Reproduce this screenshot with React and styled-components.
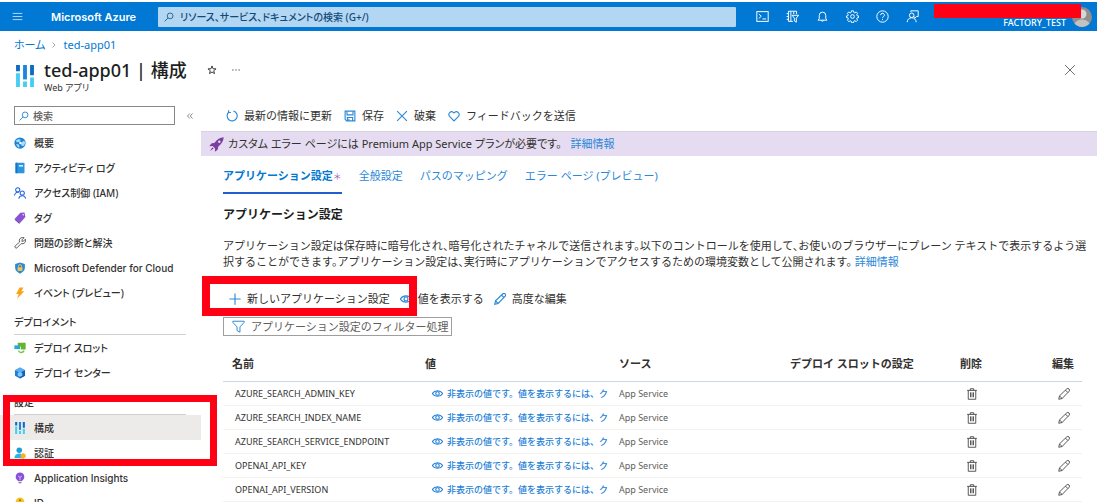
import styled, { createGlobalStyle, css } from 'styled-components';

const GlobalStyle = createGlobalStyle`
  * {
    box-sizing: border-box;
  }
  body {
    margin: 0;
    background: #fff;
    color: #323130;
    font-family: "Noto Sans", "Noto Sans CJK JP", sans-serif;
    font-size: 11px;
    line-height: 16px;
  }
  button, input {
    font: inherit;
    color: inherit;
  }
  button {
    padding: 0;
    border: 0;
    background: none;
    white-space: nowrap;
  }
  a {
    color: #2b88d8;
    text-decoration: none;
  }
`;

const Page = styled.div`
  position: relative;
  display: flex;
  flex-direction: column;
  height: 100vh;
  padding: 2px 2px 0 0;
  overflow: hidden;
`;

const Highlight = styled.div`
  position: absolute;
  left: ${props => props.$left}px;
  top: ${props => props.$top}px;
  width: ${props => props.$width}px;
  height: ${props => props.$height}px;
  border: ${props => props.$line}px solid #ff0015;
  pointer-events: none;
`;

const Icon = styled.svg`
  display: block;
  flex: none;
  width: ${props => props.$size || 12}px;
  height: ${props => props.$size || 12}px;
  fill: none;
  stroke: ${props => props.$color || 'currentColor'};
  stroke-width: ${props => props.$weight || 1};
`;

/* top bar */

const TopBar = styled.header`
  position: relative;
  display: flex;
  flex: none;
  align-items: center;
  height: 29px;
  padding-left: 12px;
  background: #0078d4;
  color: #fff;
`;

const Brand = styled.a`
  width: 107px;
  margin-left: 28px;
  color: #fff;
  font-family: Inter, sans-serif;
  font-weight: 600;
  white-space: nowrap;
`;

const GlobalSearch = styled.label`
  display: flex;
  flex: 1;
  align-items: center;
  gap: 6px;
  height: 20px;
  padding-left: 6px;
  background: #b3d6f2;
  color: #0f5288;
  border-radius: 1px;
`;

const SearchInput = styled.input`
  flex: 1;
  min-width: 0;
  height: 16px;
  padding: 0;
  border: 0;
  outline: 0;
  background: none;

  &::placeholder {
    color: ${props => props.$hint};
    opacity: 1;
  }
  ${props => props.$compact && css`
    font-size: 10px;
    font-weight: 500;
    font-feature-settings: "palt";
  `}
`;

const TopActions = styled.div`
  display: flex;
  gap: 17px;
  margin-left: 20px;
`;

const Account = styled.div`
  display: flex;
  align-items: center;
  justify-content: flex-end;
  gap: 6px;
  width: 178px;
  padding-right: 5px;
`;

const Directory = styled.span`
  align-self: flex-end;
  margin-top: 13px;
  font-size: 9px;
  font-weight: 500;
  line-height: 12px;
`;

const Redaction = styled.div`
  position: absolute;
  top: 2px;
  right: 16px;
  width: 147px;
  height: 14px;
  background: #ff0015;
`;

/* title area */

const Breadcrumb = styled.nav`
  display: flex;
  align-items: center;
  gap: 5px;
  height: 28px;
  padding-left: 14px;
  font-feature-settings: "palt";

  a {
    color: #0078d4;
  }
`;

const TitleBar = styled.div`
  display: flex;
  flex: none;
  height: 40px;
  padding: 0 21px 0 14px;
`;

const TitleIcon = styled.div`
  padding-top: 6px;
`;

const TitleText = styled.div`
  margin-left: 8px;
`;

const Title = styled.h1`
  margin: 0;
  font-size: 18px;
  font-weight: 500;
  line-height: 22px;
  color: #201f1e;
`;

const Subtitle = styled.div`
  font-size: 9px;
  line-height: 14px;
  font-feature-settings: "palt";
`;

const TitleActions = styled.div`
  display: flex;
  flex: 1;
  align-items: center;
  gap: 14px;
  height: 22px;
  margin-left: 20px;

  button:last-child {
    margin-left: auto;
  }
`;

const Body = styled.div`
  display: flex;
  flex: 1;
  min-height: 0;
`;

/* side menu */

const Sidebar = styled.aside`
  flex: none;
  width: 201px;
  padding-top: 7px;
`;

const MenuTop = styled.div`
  display: flex;
  align-items: center;
  gap: 11px;
  height: 19px;
  margin: 0 0 5px 14px;
`;

const MenuSearch = styled.label`
  display: flex;
  align-items: center;
  gap: 4px;
  width: 161px;
  height: 19px;
  padding-left: 4px;
  border: 1px solid #8a8886;
`;

const MenuItem = styled.a`
  display: flex;
  align-items: center;
  gap: 8px;
  height: 25px;
  padding-left: 14px;
  color: #323130;
  font-family: ${props => props.$latin ? 'Inter, ' : ''}"Noto Sans", "Noto Sans CJK JP", sans-serif;
  font-size: 10px;
  font-weight: 500;
  font-feature-settings: "palt";
  white-space: nowrap;
  ${props => props.$active && css`
    background: #edebe9;
  `}
`;

const MenuSection = styled.h2`
  height: 30px;
  margin: 0 15px 0 14px;
  padding-top: 9px;
  border-bottom: 1px solid #d2d0ce;
  font-size: 10px;
  font-weight: 500;
  font-feature-settings: "palt";
`;

/* content */

const Main = styled.main`
  flex: 1;
  min-width: 0;
  padding-top: 2px;
`;

const CommandBar = styled.div`
  display: flex;
  align-items: center;
  gap: ${props => props.$gap}px;
  height: ${props => props.$height}px;
  padding-left: ${props => props.$indent}px;
`;

const Command = styled.button`
  display: flex;
  align-items: center;
  gap: 6px;
`;

const Banner = styled.div`
  display: flex;
  align-items: center;
  height: 25px;
  padding-left: 8px;
  border-top: 1px solid #d8d2de;
  background: #e6dcf1;
  white-space: nowrap;

  span {
    margin: 0 9px 0 4px;
    font-feature-settings: "palt";
  }
`;

const Content = styled.div`
  padding: 8px 15px 0 22px;
`;

const Tabs = styled.nav`
  display: flex;
  gap: 17px;
  height: 30px;
`;

const Tab = styled.a`
  height: 30px;
  padding-top: 4px;
  white-space: nowrap;
  ${props => props.$active && css`
    border-bottom: 2px solid #1f5fd0;
    color: #0078d4;
    font-weight: 700;
  `}
`;

const Dirty = styled.span`
  color: #a05cb8;
  font-size: 9px;
  font-weight: 400;
`;

const Heading = styled.h2`
  margin: 12px 0 14px;
  font-size: 12px;
  font-weight: 600;
  line-height: 18px;
  color: #201f1e;
`;

const Description = styled.p`
  margin: 0 -12px 11px 0;
  font-feature-settings: "halt";
`;

const Filter = styled.label`
  display: flex;
  align-items: center;
  gap: 6px;
  width: 229px;
  height: 19px;
  padding-left: 8px;
  border: 1px solid #a19f9d;
`;

const Settings = styled.table`
  width: 100%;
  margin-top: 11px;
  border-collapse: separate;
  border-spacing: 0;
  table-layout: fixed;

  th {
    height: 35px;
    padding: 0 0 0 9px;
    border-bottom: 1px solid #c8d8e4;
    font-weight: 600;
    text-align: left;
    white-space: nowrap;
  }
  td {
    height: 24px;
    padding: 0 0 0 9px;
    border-bottom: 1px solid #f3f2f1;
    font-size: 9px;
    line-height: 16px;
    color: #605e5c;
  }
`;

const Col = styled.col`
  width: ${props => props.$width ? `${props.$width}px` : 'auto'};
`;

const NameCell = styled.td`
  && {
    padding-left: 12px;
    color: #323130;
  }
`;

const HiddenValue = styled.button`
  display: flex;
  align-items: center;
  gap: 4px;
  width: 100%;
  padding-left: 7px;
  overflow: hidden;
  color: #1f7fd6;
  font-weight: 500;
`;

const RowAction = styled.button`
  display: block;
  margin-left: 6px;
`;

const glyphs = {
  menu: <path d="M1 3.5h14M1 8h14M1 12.5h14" />,
  search: <><circle cx="9.8" cy="6.2" r="4.6" /><path d="M6.4 9.6 1 15" /></>,
  shell: <><rect x="1" y="2" width="14" height="12" /><path d="m3.5 5 3 2.700-3 2.700M8 11h4.500" /></>,
  filterDir: <><path d="M8.500 14H3V1.500h6.500V5M3 4.500H.800M3 8H.800M3 11.500H.800M6 1.500V14M9.500 1.500H13V5" /><path d="M7.500 6.500h8l-2.800 3.500v5l-2.400-1.500V10z" /></>,
  bell: <><path d="M2.500 12.500h11L12 10.4V6.6a4 4 0 0 0-8 0v3.800z" /><path d="M6.500 12.800a1.600 1.600 0 0 0 3 0" /></>,
  gear: <><circle cx="8" cy="8" r="2.3" /><path d="m6.8 1-.5 2-1.1.5-1.8-1.1-1.7 1.7 1.1 1.8L2.3 7l-1.8.4v1.8l1.9.5.5 1.1-1.1 1.8 1.7 1.7 1.8-1.1 1.1.5.4 2h2.4l.5-2 1.1-.5 1.8 1.1 1.7-1.7-1.1-1.8.5-1.1 1.9-.5V7.4L13.7 7l-.5-1.1 1.1-1.8-1.7-1.7-1.8 1.1L9.7 3l-.5-2z" /></>,
  help: <><circle cx="8" cy="8" r="7" /><path d="M5.7 6.3a2.300 2.300 0 1 1 3.400 2C8.300 8.800 8 9.100 8 10M8 11.200v1.300" /></>,
  support: <><path d="M6 2.500V1h9v7h-2l-2.200 2.200V8" /><circle cx="7" cy="6.500" r="2.800" /><path d="M1.500 15a5.500 5.500 0 0 1 11 0" /></>,
  star: <path d="m8 1.500 1.700 4.500 4.800.200-3.800 3 1.300 4.600L8 11.200l-4 2.600 1.300-4.600-3.800-3 4.800-.200z" />,
  more: <path d="M2 8h2M7 8h2M12 8h2" />,
  close: <path d="m1.500 1.500 13 13M14.500 1.500l-13 13" />,
  collapse: <path d="M7.500 3 3 8l4.500 5M13 3 8.500 8l4.500 5" />,
  crumb: <path d="m5 3 5 5-5 5" />,
  refresh: <><path d="M10 1.300A6.700 6.700 0 1 1 3.500 3" /><path d="M3.500.300V3.300H6.500" /></>,
  save: <><path d="M1.500 1.500h13v13H3.500l-2-2z" /><path d="M4 1.500v5h8v-5M4.500 14.500v-4.500h7v4.500M6.500 11.500v3" /></>,
  heart: <path d="M8 14.500 2 8.400a3.700 3.700 0 0 1 5.200-5.200l.800.800.800-.800A3.700 3.700 0 0 1 14 8.400z" />,
  plus: <path d="M8 .500v15M.500 8h15" />,
  eye: <><path d="M.500 8C4 2.500 12 2.500 15.500 8 12 13.500 4 13.500.500 8z" /><circle cx="8" cy="8" r="2.600" /></>,
  pencil: <><path d="m1 15 1-4.500L11.500 1.300a1.900 1.900 0 0 1 3.200 3.200L5.500 14z" /><path d="m10 2.800 3.200 3.200M2 10.500 5.500 14" /></>,
  funnel: <path d="M1 1.500h14v1.300L9.800 8.500V15l-3.600-2V8.500L1 2.800z" />,
  trash: <><path d="M1.500 3.200h13M5.700 3V1h4.600v2M3 3.200v11.800h10V3.200" /><path d="M6 5.800v6.500M8 5.800v6.500M10 5.800v6.500" /></>,
  rocket: <g fill="#7b3f9e" stroke="none"><path d="M15.700.300C11.800.600 8.500 2.500 6 6L2.500 6.800.300 9.800l3.500-.300L6.500 12.200l-.300 3.500 3-2.200.800-3.500c3.500-2.500 5.400-5.800 5.700-9.700z" /><path d="M3.700 11 1 15l4-2.700z" /><circle cx="11" cy="5" r="1.300" fill="#e6dcf1" /></g>,
};

const menuIcons = {
  overview: <g stroke="none"><circle cx="8" cy="8" r="7.500" fill="#1b84d8" /><path d="M2.500 4.500 6 2.500l3 1-1.500 3-4 .500zM9 8l4.500-3.500L15 8l-2 4-3-.500zM2.500 9.500l3.500 0 1.500 3-1.500 1.700z" fill="#a8dcf8" /><circle cx="8.500" cy="8" r="1.600" fill="#fff" /></g>,
  log: <g stroke="none"><rect x="2" y="1" width="12" height="14" rx="1" fill="#2b95e2" /><rect x="2" y="1" width="2.500" height="14" fill="#0f78c4" /><path d="M6.500 4h5.500v2.200H6.500z" fill="#d4effc" /></g>,
  iam: <g stroke="#2868e0" strokeWidth="1.400"><circle cx="5" cy="3.800" r="2.800" /><path d="M.700 11.500a4.600 4.600 0 0 1 6-4.400" /><circle cx="11" cy="8" r="2.800" /><path d="M6.400 15.500a4.700 4.700 0 0 1 9.200 0" /></g>,
  tag: <g stroke="none"><path d="M8.500 1 14 .800l1.200 6L8 14.800 1 9z" fill="#8a53d2" /><path d="m1 9 7 5.800-1 .700-5.800-4.900z" fill="#5f2da8" /><circle cx="12.300" cy="3.500" r="1" fill="#fff" /></g>,
  wrench: <path stroke="#55534f" strokeWidth="1.200" d="M10.500 6 11 3l2.600-2A4.500 4.500 0 0 0 7.400 6.800L1.500 12a1.800 1.800 0 0 0 2.500 2.500L9.500 8.800A4.500 4.500 0 0 0 15.200 2.800L13 5.300z" />,
  defender: <g stroke="none"><path d="M8 .500 14.500 2.500v5.200c0 3.800-3 6.300-6.500 7.800-3.500-1.500-6.500-4-6.500-7.800V2.500z" fill="#2a8ade" /><path d="M4.800 7h6.400v4.800H4.800z" fill="#f9c646" /><path d="M6 7V5.500a2 2 0 0 1 4 0V7" fill="none" stroke="#f9c646" strokeWidth="1.200" /></g>,
  event: <path stroke="none" fill="#fba21b" d="M7.500.500h5L9.800 5.800h4L4 15.500l2.300-6.200H2.800z" />,
  slot: <g stroke="none"><path d="M5 1h10.500v9H9V6H5z" fill="#63b52e" /><path d="M.500 4.500H8v5H.500z" fill="#28a8d8" /><path d="M6 11.500c1 3 5.500 3.500 7.500 0" fill="none" stroke="#79c843" strokeWidth="2" /></g>,
  center: <g stroke="none"><path d="m8 .700 6.700 3.600v7.400L8 15.300l-6.700-3.600V4.300z" fill="#1f7ad8" /><path d="m8 .700 6.700 3.600L8 8 1.300 4.300z" fill="#5aaef2" /><path d="M8 8v7.300l6.700-3.600V4.300z" fill="#1260b8" /><path d="m5 8 3-1.500L11 8v3.500L8 13l-3-1.500z" fill="#86c8fa" /></g>,
  config: <g stroke="none"><path d="M1.500 0h2.800v4.500H1.500zM11.700 0h2.800v7.500h-2.800z" fill="#0f6ac4" /><path d="M6.600 0h2.800v10.500H6.600z" fill="#1b86de" /><path d="M1.500 6h2.800v10H1.500zM6.600 12h2.800v4H6.600zM11.700 9h2.800v7h-2.800z" fill="#45cdf4" /></g>,
  auth: <g stroke="none"><circle cx="7" cy="4.300" r="3.700" fill="#1c9ed8" /><path d="M.500 15a6.500 6.500 0 0 1 13 0z" fill="#28b4ea" /><path d="m12 8 3.500 2v3.500L12 15.500l-3-2V10z" fill="#f5b321" /></g>,
  insights: <g stroke="none"><path d="M8 .500a5.800 5.800 0 0 0-3 10.700V12h6v-.800A5.800 5.800 0 0 0 8 .500z" fill="#8a50dc" /><path d="M5.700 13h4.600v1L8 15.700 5.700 14z" fill="#8c8a94" /><path d="M5.500 5.500 8 7l2.500-1.500M8 7v4" fill="none" stroke="#e8d8fc" /></g>,
  identity: <g stroke="none"><path d="M8 .500a6 6 0 0 0-3 11V14l3 2 3-2v-2.500a6 6 0 0 0-3-11z" fill="#f8c220" /><circle cx="8" cy="4.300" r="1.300" fill="#9a6a10" /></g>,
};

const Glyph = ({ name, size, color, weight }) => (
  <Icon viewBox="0 0 16 16" $size={size} $color={color} $weight={weight} aria-hidden="true">
    {glyphs[name] || menuIcons[name]}
  </Icon>
);

const menu = [
  { icon: 'overview', label: '概要' },
  { icon: 'log', label: 'アクティビティ ログ' },
  { icon: 'iam', label: 'アクセス制御 (IAM)' },
  { icon: 'tag', label: 'タグ' },
  { icon: 'wrench', label: '問題の診断と解決' },
  { icon: 'defender', label: 'Microsoft Defender for Cloud', latin: true },
  { icon: 'event', label: 'イベント (プレビュー)' },
  { section: 'デプロイメント' },
  { icon: 'slot', label: 'デプロイ スロット' },
  { icon: 'center', label: 'デプロイ センター' },
  { section: '設定' },
  { icon: 'config', label: '構成', active: true },
  { icon: 'auth', label: '認証' },
  { icon: 'insights', label: 'Application Insights', latin: true },
  { icon: 'identity', label: 'ID', latin: true },
];

const topActions = [
  ['shell', 'Cloud Shell'],
  ['filterDir', 'ディレクトリ'],
  ['bell', '通知'],
  ['gear', '設定'],
  ['help', 'ヘルプ'],
  ['support', 'フィードバック'],
];

const commands = [
  ['refresh', '最新の情報に更新'],
  ['save', '保存'],
  ['close', '破棄'],
  ['heart', 'フィードバックを送信'],
];

const settingCommands = [
  ['plus', '新しいアプリケーション設定'],
  ['eye', '値を表示する'],
  ['pencil', '高度な編集'],
];

const settings = [
  'AZURE_SEARCH_ADMIN_KEY',
  'AZURE_SEARCH_INDEX_NAME',
  'AZURE_SEARCH_SERVICE_ENDPOINT',
  'OPENAI_API_KEY',
  'OPENAI_API_VERSION',
];

const Header = () => (
  <TopBar>
    <button aria-label="メニュー"><Glyph name="menu" size={11} /></button>
    <Brand href="#">Microsoft Azure</Brand>
    <GlobalSearch>
      <Glyph name="search" size={10} weight={1.3} />
      <SearchInput $compact $hint="#0f4a7a" aria-label="検索" placeholder="リソース、サービス、ドキュメントの検索 (G+/)" />
    </GlobalSearch>
    <TopActions>
      {topActions.map(([icon, label]) => (
        <button key={icon} aria-label={label}><Glyph name={icon} size={13} weight={1.2} /></button>
      ))}
    </TopActions>
    <Account>
      <Directory>FACTORY_TEST</Directory>
      <Icon viewBox="0 0 20 20" $size={20} aria-hidden="true">
        <g stroke="none">
          <circle cx="10" cy="10" r="10" fill="#8f8f8f" />
          <circle cx="10" cy="7" r="4.500" fill="#d6d6d6" />
          <path d="M2.500 16.500a9 9 0 0 1 15 0 10 10 0 0 1-15 0z" fill="#c2c2c2" />
        </g>
      </Icon>
    </Account>
    <Redaction />
  </TopBar>
);

const Menu = () => (
  <Sidebar>
    <MenuTop>
      <MenuSearch>
        <Glyph name="search" size={10} color="#2b88d8" weight={1.5} />
        <SearchInput $compact $hint="#605e5c" aria-label="メニューの検索" placeholder="検索" />
      </MenuSearch>
      <button aria-label="折りたたむ"><Glyph name="collapse" size={8} color="#605e5c" weight={1.5} /></button>
    </MenuTop>
    {menu.map(item => item.section ? (
      <MenuSection key={item.section}>{item.section}</MenuSection>
    ) : (
      <MenuItem key={item.label} href="#" $active={item.active} $latin={item.latin}>
        <Glyph name={item.icon} />
        {item.label}
      </MenuItem>
    ))}
  </Sidebar>
);

const SettingsTable = () => (
  <Settings>
    <colgroup>
      <Col $width={193} />
      <Col $width={194} />
      <Col $width={171} />
      <Col />
      <Col $width={92} />
      <Col $width={39} />
    </colgroup>
    <thead>
      <tr>
        <th>名前</th>
        <th>値</th>
        <th>ソース</th>
        <th>デプロイ スロットの設定</th>
        <th>削除</th>
        <th>編集</th>
      </tr>
    </thead>
    <tbody>
      {settings.map(name => (
        <tr key={name}>
          <NameCell>{name}</NameCell>
          <td>
            <HiddenValue>
              <Glyph name="eye" size={11} weight={1.5} />
              非表示の値です。値を表示するには、ク
            </HiddenValue>
          </td>
          <td>App Service</td>
          <td />
          <td><RowAction aria-label="削除"><Glyph name="trash" weight={1.2} color="#484644" /></RowAction></td>
          <td><RowAction aria-label="編集"><Glyph name="pencil" weight={1.2} color="#484644" /></RowAction></td>
        </tr>
      ))}
    </tbody>
  </Settings>
);

const App = () => (
  <>
    <GlobalStyle />
    <Page>
      <Header />
      <Breadcrumb>
        <a href="#">ホーム</a>
        <Glyph name="crumb" size={8} color="#8a8886" weight={1.5} />
        <a href="#">ted-app01</a>
      </Breadcrumb>
      <TitleBar>
        <TitleIcon><Glyph name="config" size={22} /></TitleIcon>
        <TitleText>
          <Title>ted-app01 | 構成</Title>
          <Subtitle>Web アプリ</Subtitle>
        </TitleText>
        <TitleActions>
          <button aria-label="お気に入り"><Glyph name="star" size={10} weight={1.5} /></button>
          <button aria-label="その他"><Glyph name="more" size={10} weight={1.5} /></button>
          <button aria-label="閉じる"><Glyph name="close" color="#605e5c" weight={1.2} /></button>
        </TitleActions>
      </TitleBar>
      <Body>
        <Menu />
        <Main>
          <CommandBar $gap={12} $height={30} $indent={25}>
            {commands.map(([icon, label]) => (
              <Command key={icon}><Glyph name={icon} color="#2b88d8" weight={1.5} />{label}</Command>
            ))}
          </CommandBar>
          <Banner>
            <Glyph name="rocket" size={15} />
            <span>カスタム エラー ページには Premium App Service プランが必要です。</span>
            <a href="#">詳細情報</a>
          </Banner>
          <Content>
            <Tabs>
              <Tab href="#" $active>アプリケーション設定<Dirty>＊</Dirty></Tab>
              <Tab href="#">全般設定</Tab>
              <Tab href="#">パスのマッピング</Tab>
              <Tab href="#">エラー ページ (プレビュー)</Tab>
            </Tabs>
            <Heading>アプリケーション設定</Heading>
            <Description>
              アプリケーション設定は保存時に暗号化され、暗号化されたチャネルで送信されます。以下のコントロールを使用して、お使いのブラウザーにプレーン テキストで表示するよう選択することができます。アプリケーション設定は、実行時にアプリケーションでアクセスするための環境変数として公開されます。 <a href="#">詳細情報</a>
            </Description>
            <CommandBar $gap={10} $height={36} $indent={6}>
              {settingCommands.map(([icon, label]) => (
                <Command key={icon}><Glyph name={icon} color="#2b88d8" weight={1.5} />{label}</Command>
              ))}
            </CommandBar>
            <Filter>
              <Glyph name="funnel" size={13} color="#2b88d8" weight={1.2} />
              <SearchInput $hint="#605e5c" aria-label="フィルター" placeholder="アプリケーション設定のフィルター処理" />
            </Filter>
            <SettingsTable />
          </Content>
        </Main>
      </Body>
      <Highlight $left={3} $top={395} $width={214} $height={71} $line={7} />
      <Highlight $left={202} $top={276} $width={215} $height={40} $line={8} />
    </Page>
  </>
);

export default App;
